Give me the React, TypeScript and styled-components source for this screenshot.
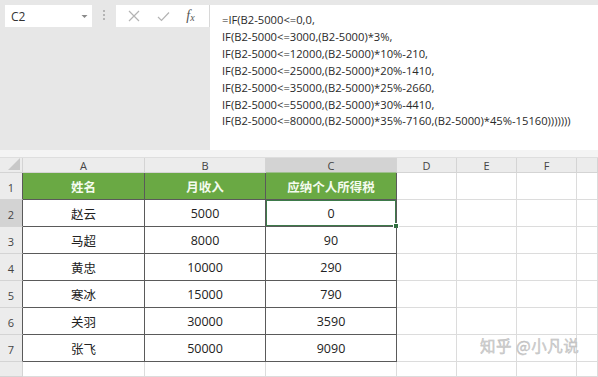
import React from "react";
import styled, { createGlobalStyle } from "styled-components";

const GlobalStyle = createGlobalStyle`
  html, body {
    margin: 0;
    padding: 0;
    background: #ffffff;
    overflow: hidden;
  }
  body {
    font-family: "Open Sans", "Noto Sans CJK SC", sans-serif;
  }
`;

const columns = ["A", "B", "C", "D", "E", "F", ""];
const rows: [string, string, string][] = [
  ["赵云", "5000", "0"],
  ["马超", "8000", "90"],
  ["黄忠", "10000", "290"],
  ["寒冰", "15000", "790"],
  ["关羽", "30000", "3590"],
  ["张飞", "50000", "9090"],
];

const formula = [
  "=IF(B2-5000<=0,0,",
  "IF(B2-5000<=3000,(B2-5000)*3%,",
  "IF(B2-5000<=12000,(B2-5000)*10%-210,",
  "IF(B2-5000<=25000,(B2-5000)*20%-1410,",
  "IF(B2-5000<=35000,(B2-5000)*25%-2660,",
  "IF(B2-5000<=55000,(B2-5000)*30%-4410,",
  "IF(B2-5000<=80000,(B2-5000)*35%-7160,(B2-5000)*45%-15160)))))))",
];

const App = () => {
  return (
    <Page>
      <GlobalStyle />
      <Toolbar>
        <NameBox>
          C2
          <svg width="7" height="5" viewBox="0 0 7 5">
            <path d="M0.5 1 L3.5 4 L6.5 1 Z" fill="#8a8a8a" />
          </svg>
        </NameBox>
        <Grip>
          <i />
          <i />
          <i />
        </Grip>
        <FuncButtons>
          <svg width="12" height="12" viewBox="0 0 12 12">
            <path d="M1 1 L11 11 M11 1 L1 11" stroke="#b4b4b4" strokeWidth="1.2" />
          </svg>
          <svg width="13" height="11" viewBox="0 0 13 11">
            <path d="M1 6 L4.5 9.5 L12 1.5" stroke="#b4b4b4" strokeWidth="1.2" fill="none" />
          </svg>
          <Fx>
            f<sub>x</sub>
          </Fx>
        </FuncButtons>
        <FormulaBox>
          {formula.map((line) => (
            <div key={line}>{line}</div>
          ))}
        </FormulaBox>
      </Toolbar>
      <Strip />
      <Sheet>
        <Corner>
          <svg width="12" height="12" viewBox="0 0 12 12">
            <path d="M12 0 L12 12 L0 12 Z" fill="#c8c8c8" />
          </svg>
        </Corner>
        {columns.map((c) => (
          <ColHead key={c || "g"} $active={c === "C"}>
            {c}
          </ColHead>
        ))}

        <RowHead $dark>1</RowHead>
        <HeadCell>姓名</HeadCell>
        <HeadCell>月收入</HeadCell>
        <HeadCell>应纳个人所得税</HeadCell>
        <Cell />
        <Cell />
        <Cell />
        <Cell />

        {rows.map(([name, income, tax], i) => (
          <React.Fragment key={name}>
            <RowHead $dark $active={i === 0}>
              {i + 2}
            </RowHead>
            <DataCell>{name}</DataCell>
            <DataCell>{income}</DataCell>
            <DataCell $selected={i === 0}>
              {tax}
              {i === 0 && <Handle />}
            </DataCell>
            <Cell />
            <Cell />
            <Cell />
            <Cell />
          </React.Fragment>
        ))}

        <RowHead />
        {columns.map((c) => (
          <Cell key={"last" + c} />
        ))}

        <Watermark>知乎 @小凡说</Watermark>
      </Sheet>
    </Page>
  );
};

export default App;

const Page = styled.div`
  width: 598px;
  height: 377px;
  display: flex;
  flex-direction: column;
  overflow: hidden;
`;

const Toolbar = styled.div`
  display: flex;
  align-items: flex-start;
  height: 150px;
  padding: 5px 0 0 5px;
  box-sizing: border-box;
  background: #e7e7e7;
`;

const NameBox = styled.div`
  display: flex;
  align-items: center;
  justify-content: space-between;
  width: 87px;
  height: 22px;
  padding: 0 4px 0 6px;
  box-sizing: border-box;
  background: #ffffff;
  font-size: 12px;
  color: #333333;
`;

const Grip = styled.div`
  display: flex;
  flex-direction: column;
  gap: 2px;
  margin: 5px 11px 0 11px;

  & > i {
    width: 2px;
    height: 2px;
    background: #b5b5b5;
  }
`;

const FuncButtons = styled.div`
  display: flex;
  align-items: center;
  justify-content: space-around;
  width: 94px;
  height: 22px;
  padding: 0 6px 0 4px;
  box-sizing: border-box;
  background: #ffffff;
  border-right: 1px solid #d8d8d8;
`;

const Fx = styled.span`
  font-family: "Liberation Serif", serif;
  font-style: italic;
  font-size: 14px;
  color: #555555;

  & > sub {
    font-size: 10px;
    vertical-align: -1px;
  }
`;

const FormulaBox = styled.div`
  flex: 1;
  height: 145px;
  padding: 7px 0 0 12px;
  box-sizing: border-box;
  background: #ffffff;
  font-size: 11.2px;
  line-height: 16.9px;
  color: #2a2a2a;
  white-space: nowrap;
  overflow: hidden;
`;

const Strip = styled.div`
  height: 7px;
  background: #f4f4f4;
  border-bottom: 1px solid #dedede;
`;

const Sheet = styled.div`
  position: relative;
  flex: 1;
  display: grid;
  grid-template-columns: 23px 122px 121px 131px 60px 60px 60px 1fr;
  grid-template-rows: 15px repeat(7, 27px) 1fr;
`;

const Corner = styled.div`
  display: flex;
  align-items: flex-end;
  justify-content: flex-end;
  padding: 0 2px 2px 0;
  background: #ececec;
  border-right: 1px solid #d4d4d4;
  border-bottom: 1px solid #d4d4d4;
`;

const ColHead = styled.div<{ $active?: boolean }>`
  display: flex;
  align-items: center;
  justify-content: center;
  background: ${(p) => (p.$active ? "#d3d3d3" : "#ececec")};
  border-right: 1px solid #d4d4d4;
  border-bottom: 1px solid ${(p) => (p.$active ? "#9fbf8f" : "#d4d4d4")};
  font-size: 11px;
  color: #444444;
`;

const RowHead = styled.div<{ $active?: boolean; $dark?: boolean }>`
  display: flex;
  align-items: center;
  justify-content: center;
  padding-top: 3px;
  background: ${(p) => (p.$active ? "#d3d3d3" : "#ececec")};
  border-right: 1px solid ${(p) => (p.$dark ? "#5a5a5a" : "#d4d4d4")};
  border-bottom: 1px solid #d4d4d4;
  font-size: 11px;
  color: #444444;
`;

const Cell = styled.div`
  border-right: 1px solid #dcdcdc;
  border-bottom: 1px solid #dcdcdc;
`;

const HeadCell = styled.div`
  display: flex;
  align-items: center;
  justify-content: center;
  background: #6aa944;
  border-right: 1px solid #5a5a5a;
  border-bottom: 1px solid #5a5a5a;
  font-family: "Noto Sans CJK SC", sans-serif;
  font-weight: 700;
  font-size: 12.5px;
  color: #f4fbef;
`;

const DataCell = styled.div<{ $selected?: boolean }>`
  position: relative;
  display: flex;
  align-items: center;
  justify-content: center;
  border-right: 1px solid #5a5a5a;
  border-bottom: 1px solid #5a5a5a;
  box-shadow: ${(p) => (p.$selected ? "inset 0 0 0 1px #3d7a4a" : "none")};
  font-family: "Open Sans", "Noto Sans CJK SC", sans-serif;
  font-size: 12.5px;
  color: #222222;
`;

const Handle = styled.span`
  position: absolute;
  right: -3px;
  bottom: -3px;
  width: 4px;
  height: 4px;
  background: #2f6f3e;
  border: 1px solid #ffffff;
`;

const Watermark = styled.div`
  position: absolute;
  left: 480px;
  top: 176px;
  font-family: "Noto Sans CJK SC", sans-serif;
  font-size: 15.5px;
  color: #d2d2d2;
  -webkit-text-stroke: 0.4px #b8b8b8;
  letter-spacing: 0.5px;
`;
